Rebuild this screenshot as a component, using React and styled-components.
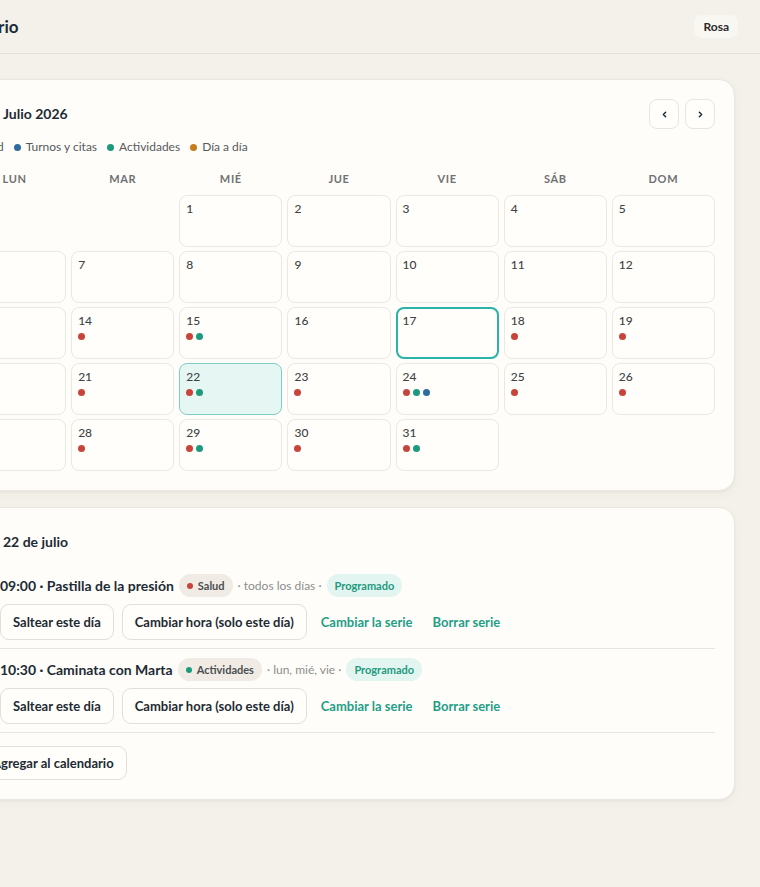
import styled, { createGlobalStyle } from "styled-components";
import { CalendarDays, CalendarCheck, ChevronLeft, ChevronRight, Plus } from "lucide-react";

const CATEGORY = {
  salud: { label: "Salud", color: "#c8443a" },
  turnos: { label: "Turnos y citas", color: "#2f6b9f" },
  actividades: { label: "Actividades", color: "#1c9a7b" },
  diario: { label: "Día a día", color: "#c77c1f" },
};

const WEEKDAYS = ["LUN", "MAR", "MIÉ", "JUE", "VIE", "SÁB", "DOM"];

// julio 2026 empieza en miércoles
const FIRST_OFFSET = 2;
const TODAY = 17;
const SELECTED = 22;

const EVENTS = {
  13: ["salud"],
  14: ["salud"],
  15: ["salud", "actividades"],
  18: ["salud"],
  19: ["salud"],
  20: ["salud", "actividades"],
  21: ["salud"],
  22: ["salud", "actividades"],
  23: ["salud"],
  24: ["salud", "actividades", "turnos"],
  25: ["salud"],
  26: ["salud"],
  27: ["salud", "actividades"],
  28: ["salud"],
  29: ["salud", "actividades"],
  30: ["salud"],
  31: ["salud", "actividades"],
};

const AGENDA = [
  {
    id: 1,
    time: "09:00",
    title: "Pastilla de la presión",
    category: "salud",
    repeat: "todos los días",
  },
  {
    id: 2,
    time: "10:30",
    title: "Caminata con Marta",
    category: "actividades",
    repeat: "lun, mié, vie",
  },
];

function App() {
  const cells = [];
  for (let i = 0; i < FIRST_OFFSET; i++) cells.push(null);
  for (let d = 1; d <= 31; d++) cells.push(d);

  return (
    <>
      <GlobalStyle />
      <Viewport>
        <Page>
          <TopBar>
            <Brand>Calendario</Brand>
            <UserChip>Rosa</UserChip>
          </TopBar>

          <Main>
            <Card>
              <CalendarHead>
                <Heading>
                  <CalendarDays size={22} strokeWidth={2} />
                  Julio 2026
                </Heading>
                <NavGroup>
                  <NavButton aria-label="Mes anterior">
                    <ChevronLeft size={9} strokeWidth={4} />
                  </NavButton>
                  <NavButton aria-label="Mes siguiente">
                    <ChevronRight size={9} strokeWidth={4} />
                  </NavButton>
                </NavGroup>
              </CalendarHead>

              <Legend>
                {Object.entries(CATEGORY).map(([key, { label, color }]) => (
                  <LegendItem key={key}>
                    <Dot $color={color} />
                    {label}
                  </LegendItem>
                ))}
              </Legend>

              <Weekdays>
                {WEEKDAYS.map((w) => (
                  <WeekdayLabel key={w}>{w}</WeekdayLabel>
                ))}
              </Weekdays>

              <MonthGrid>
                {cells.map((day, i) =>
                  day === null ? (
                    <div key={`empty-${i}`} />
                  ) : (
                    <DayCell
                      key={day}
                      $today={day === TODAY}
                      $selected={day === SELECTED}
                    >
                      <DayNumber>{day}</DayNumber>
                      {EVENTS[day] && (
                        <DotRow>
                          {EVENTS[day].map((c) => (
                            <Dot key={c} $color={CATEGORY[c].color} />
                          ))}
                        </DotRow>
                      )}
                    </DayCell>
                  )
                )}
              </MonthGrid>
            </Card>

            <Card $compact>
              <Heading $spaced>
                <CalendarCheck size={22} strokeWidth={2} />
                22 de julio
              </Heading>

              {AGENDA.map((item) => (
                <AgendaItem key={item.id}>
                  <Check />
                  <ItemBody>
                    <TitleRow>
                      <ItemTitle>
                        {item.time} · {item.title}
                      </ItemTitle>
                      <Tag>
                        <Dot $color={CATEGORY[item.category].color} $small />
                        {CATEGORY[item.category].label}
                      </Tag>
                      <Meta>· {item.repeat} ·</Meta>
                      <Status>Programado</Status>
                    </TitleRow>
                    <Actions>
                      <Button>Saltear este día</Button>
                      <Button>Cambiar hora (solo este día)</Button>
                      <LinkButton>Cambiar la serie</LinkButton>
                      <LinkButton>Borrar serie</LinkButton>
                    </Actions>
                  </ItemBody>
                </AgendaItem>
              ))}

              <AddButton>
                <Plus size={13} strokeWidth={2.6} />
                Agregar al calendario
              </AddButton>
            </Card>
          </Main>
        </Page>
      </Viewport>
    </>
  );
}

const GlobalStyle = createGlobalStyle`
  * { box-sizing: border-box; }
  html, body {
    margin: 0;
    background: #f4f1eb;
  }
  body {
    font-family: Lato, "Noto Sans", sans-serif;
    color: #1d2b36;
    overflow: hidden;
  }
  button { font-family: inherit; cursor: pointer; }
`;

/* the page column is wider than the window and is pinned to the right edge */
const Viewport = styled.div`
  display: flex;
  justify-content: flex-end;
  min-height: 100vh;
  overflow: hidden;
`;

const Page = styled.div`
  flex: 0 0 842px;
`;

const TopBar = styled.header`
  height: 54px;
  display: flex;
  align-items: center;
  justify-content: space-between;
  padding: 0 22px 0 19px;
  border-bottom: 1px solid #e6e2da;
`;

const Brand = styled.h1`
  margin: 0;
  font-size: 17px;
  font-weight: 700;
  color: #1d2b36;
`;

const UserChip = styled.button`
  border: none;
  background: #f9f7f2;
  border-radius: 8px;
  padding: 4px 9px;
  font-size: 12px;
  font-weight: 700;
  color: #2a2a2a;
`;

const Main = styled.main`
  display: flex;
  flex-direction: column;
  gap: 16px;
  padding: 25px 25px;
`;

const Card = styled.section`
  background: #fffdf9;
  border: 1px solid #ece8e1;
  border-radius: 16px;
  box-shadow: 0 1px 2px rgba(70, 55, 30, 0.05), 0 3px 10px rgba(70, 55, 30, 0.04);
  padding: ${(p) => (p.$compact ? "23px 19px 19px" : "19px")};
  display: flex;
  flex-direction: column;
`;

const CalendarHead = styled.div`
  display: flex;
  align-items: center;
  justify-content: space-between;
  height: 30px;
  margin-bottom: 10px;
`;

const Heading = styled.h2`
  margin: 0 0 ${(p) => (p.$spaced ? "12px" : "0")};
  display: flex;
  align-items: center;
  gap: 18px;
  font-size: 14px;
  line-height: 20px;
  font-weight: 700;
  color: #1d2b36;
`;

const NavGroup = styled.div`
  display: flex;
  gap: 6px;
`;

const NavButton = styled.button`
  width: 30px;
  height: 30px;
  display: grid;
  place-items: center;
  padding: 0;
  border: 1px solid #e9e5dd;
  border-radius: 8px;
  background: #fffefb;
  color: #1d2b36;
`;

const Legend = styled.div`
  display: flex;
  align-items: center;
  gap: 10px;
  margin-bottom: 16px;
  font-size: 12px;
  line-height: 16px;
  color: #555a5e;
`;

const LegendItem = styled.span`
  display: inline-flex;
  align-items: center;
  gap: 5px;
`;

const Dot = styled.span`
  flex: none;
  width: ${(p) => (p.$small ? "6px" : "7px")};
  height: ${(p) => (p.$small ? "6px" : "7px")};
  border-radius: 50%;
  background: ${(p) => p.$color};
`;

const Weekdays = styled.div`
  display: grid;
  grid-template-columns: repeat(7, 1fr);
  gap: 5px;
  margin-bottom: 8px;
`;

const WeekdayLabel = styled.div`
  text-align: center;
  font-size: 11px;
  line-height: 16px;
  font-weight: 700;
  letter-spacing: 0.06em;
  color: #6f7173;
`;

const MonthGrid = styled.div`
  display: grid;
  grid-template-columns: repeat(7, 1fr);
  grid-auto-rows: 52px;
  gap: 4px 5px;
`;

const DayCell = styled.div`
  border: ${(p) => (p.$today ? "2px solid #2bb3a6" : p.$selected ? "1px solid #7dcfc6" : "1px solid #ece8e0")};
  border-radius: 8px;
  background: ${(p) => (p.$selected ? "#e5f6f3" : "#fffefb")};
  padding: ${(p) => (p.$today ? "5px 5px" : "6px 6px")};
`;

const DayNumber = styled.div`
  font-size: 12px;
  line-height: 14px;
  font-weight: 500;
  color: #3f4244;
`;

const DotRow = styled.div`
  display: flex;
  gap: 3px;
  margin-top: 5px;
`;

const AgendaItem = styled.div`
  display: grid;
  grid-template-columns: 22px 1fr;
  column-gap: 15px;
  padding: 9px 0 8px;
  border-bottom: 1px solid #e9e5de;
`;

const Check = styled.span`
  width: 20px;
  height: 20px;
  margin-top: 1px;
  border: 1.5px solid #cfcac0;
  border-radius: 50%;
`;

const ItemBody = styled.div`
  display: flex;
  flex-direction: column;
  gap: 7px;
`;

const TitleRow = styled.div`
  display: flex;
  align-items: center;
  gap: 5px;
  min-height: 23px;
`;

const ItemTitle = styled.span`
  font-size: 14px;
  font-weight: 700;
  color: #1d2b36;
`;

const Pill = styled.span`
  display: inline-flex;
  align-items: center;
  height: 23px;
  border-radius: 12px;
  font-size: 11px;
  font-weight: 700;
`;

const Tag = styled(Pill)`
  gap: 5px;
  padding: 0 8px;
  background: #f0ece5;
  color: #4b4e50;
`;

const Status = styled(Pill)`
  padding: 0 8px;
  background: #e3f5f0;
  color: #1f9a80;
`;

const Meta = styled.span`
  font-size: 12px;
  color: #8b8d8c;
`;

const Actions = styled.div`
  display: flex;
  align-items: center;
  gap: 8px;
`;

const Button = styled.button`
  height: 36px;
  padding: 0 12px;
  border: 1px solid #e3dfd7;
  border-radius: 9px;
  background: #fffefb;
  font-size: 13px;
  font-weight: 700;
  color: #1e2a33;
`;

const LinkButton = styled.button`
  border: none;
  background: none;
  padding: 0 6px;
  font-size: 13px;
  font-weight: 700;
  color: #1f9e88;
`;

const AddButton = styled(Button)`
  align-self: flex-start;
  height: 34px;
  margin-top: 13px;
  display: inline-flex;
  align-items: center;
  gap: 3px;
`;

export default App;
